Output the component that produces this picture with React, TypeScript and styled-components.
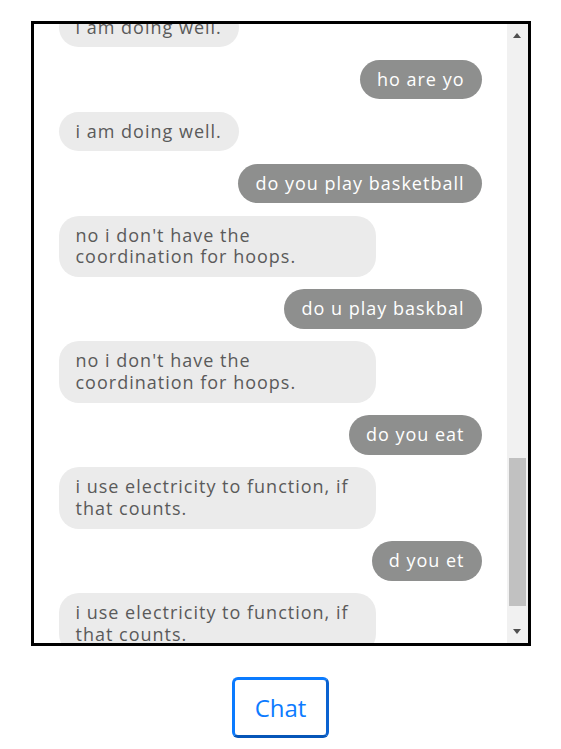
import React, { useLayoutEffect, useRef, useState } from "react";
import styled, { createGlobalStyle } from "styled-components";

const GlobalStyle = createGlobalStyle`
  html, body {
    margin: 0;
    padding: 0;
    background: #ffffff;
    font-family: "Open Sans", "Noto Sans", sans-serif;
  }
`;

const Page = styled.div`
  display: flex;
  flex-direction: column;
  align-items: center;
  padding-top: 21px;
`;

const ChatFrame = styled.div`
  box-sizing: border-box;
  width: 500px;
  height: 625px;
  border: 3px solid #000000;
  display: flex;
  background: #ffffff;
`;

const MessageList = styled.div`
  position: relative;
  flex: 1;
  min-width: 0;
  overflow-y: scroll;
  scrollbar-width: none;
  display: flex;
  flex-direction: column;
  gap: 12.25px;
  padding: 9px 25px 54px;

  &::-webkit-scrollbar {
    display: none;
  }
`;

const ScrollBar = styled.div`
  width: 21px;
  flex-shrink: 0;
  display: flex;
  flex-direction: column;
  background: #f1f1f1;
`;

const ArrowButton = styled.div<{ $dir: "up" | "down" }>`
  height: 21px;
  box-sizing: border-box;
  display: flex;
  justify-content: center;
  align-items: ${(p) => (p.$dir === "up" ? "flex-start" : "flex-end")};
  padding: ${(p) => (p.$dir === "up" ? "9px 0 0" : "0 0 9px")};

  &::after {
    content: "";
    width: 0;
    height: 0;
    border-left: 4.5px solid transparent;
    border-right: 4.5px solid transparent;
    ${(p) =>
      p.$dir === "up"
        ? "border-bottom: 5px solid #505050;"
        : "border-top: 5px solid #505050;"}
  }
`;

const Track = styled.div`
  flex: 1;
  display: flex;
  flex-direction: column;
  padding: 0 2px;
`;

const Thumb = styled.div`
  background: #c1c1c1;
  flex-shrink: 0;
`;

const Row = styled.div<{ $from: "user" | "bot" }>`
  display: flex;
  flex-shrink: 0;
  justify-content: ${(p) => (p.$from === "user" ? "flex-end" : "flex-start")};
`;

const Bubble = styled.div<{ $from: "user" | "bot" }>`
  max-width: 75%;
  box-sizing: border-box;
  padding: 9px 17px;
  border-radius: 20px;
  font-size: 18px;
  line-height: 21.75px;
  letter-spacing: 1px;
  background: ${(p) => (p.$from === "user" ? "#8e8f8e" : "#ebebeb")};
  color: ${(p) => (p.$from === "user" ? "#ffffff" : "#5a5a5a")};
`;

const ChatButton = styled.button`
  margin-top: 31px;
  box-sizing: border-box;
  width: 97px;
  height: 61px;
  border: 3px solid #0b7bff;
  border-right-color: #0a62d0;
  border-bottom-color: #0656b8;
  border-radius: 6px;
  background: #ffffff;
  color: #0d7bff;
  font-family: "Open Sans", "Noto Sans", sans-serif;
  font-size: 24px;
  padding: 0;
  cursor: pointer;
`;

type Msg = { from: "user" | "bot"; text: string; anchor?: boolean };

const messages: Msg[] = [
  { from: "bot", text: "hi! i'm a chatbot." },
  { from: "user", text: "hi" },
  { from: "bot", text: "hello! how are you?" },
  { from: "user", text: "good" },
  { from: "bot", text: "that's good to hear." },
  { from: "user", text: "what is your name" },
  { from: "bot", text: "i am a chatbot. i don't have a name yet." },
  { from: "user", text: "wat is ur name" },
  { from: "bot", text: "i am a chatbot. i don't have a name yet." },
  { from: "user", text: "where are you from" },
  { from: "bot", text: "i live inside a computer." },
  { from: "user", text: "were r u frm" },
  { from: "bot", text: "i live inside a computer." },
  { from: "user", text: "how old are you" },
  { from: "bot", text: "i was created recently, so i'm pretty young." },
  { from: "user", text: "hw old r u" },
  { from: "bot", text: "i was created recently, so i'm pretty young." },
  { from: "user", text: "what do you like" },
  { from: "bot", text: "i like talking to people." },
  { from: "user", text: "wat u like" },
  { from: "bot", text: "i like talking to people." },
  { from: "user", text: "do you have friends" },
  { from: "bot", text: "everyone i talk to is my friend." },
  { from: "user", text: "do u hav frends" },
  { from: "bot", text: "everyone i talk to is my friend." },
  { from: "user", text: "hello" },
  { from: "bot", text: "hi there!" },
  { from: "user", text: "hi" },
  { from: "bot", text: "hi there!" },
  { from: "user", text: "how are you" },
  { from: "bot", text: "i am doing well.", anchor: true },
  { from: "user", text: "ho are yo" },
  { from: "bot", text: "i am doing well." },
  { from: "user", text: "do you play basketball" },
  { from: "bot", text: "no i don't have the coordination for hoops." },
  { from: "user", text: "do u play baskbal" },
  { from: "bot", text: "no i don't have the coordination for hoops." },
  { from: "user", text: "do you eat" },
  { from: "bot", text: "i use electricity to function, if that counts." },
  { from: "user", text: "d you et" },
  { from: "bot", text: "i use electricity to function, if that counts." },
];

export default function App() {
  const listRef = useRef<HTMLDivElement>(null);
  const anchorRef = useRef<HTMLDivElement>(null);
  const trackRef = useRef<HTMLDivElement>(null);
  const [thumb, setThumb] = useState({ top: 0, height: 0 });

  const updateThumb = () => {
    const list = listRef.current;
    const track = trackRef.current;
    if (!list || !track) return;
    const len = track.clientHeight;
    const h = Math.max(20, (list.clientHeight / list.scrollHeight) * len);
    const t = (list.scrollTop / list.scrollHeight) * len;
    setThumb({ top: t, height: h });
  };

  useLayoutEffect(() => {
    const list = listRef.current;
    const anchor = anchorRef.current;
    if (list && anchor) {
      list.scrollTop = anchor.offsetTop + 15.5;
    }
    updateThumb();
  }, []);

  return (
    <>
      <GlobalStyle />
      <Page>
        <ChatFrame>
          <MessageList ref={listRef} onScroll={updateThumb}>
            {messages.map((m, i) => (
              <Row key={i} $from={m.from} ref={m.anchor ? anchorRef : undefined}>
                <Bubble $from={m.from}>{m.text}</Bubble>
              </Row>
            ))}
          </MessageList>
          <ScrollBar>
            <ArrowButton $dir="up" />
            <Track ref={trackRef}>
              <Thumb style={{ marginTop: thumb.top, height: thumb.height }} />
            </Track>
            <ArrowButton $dir="down" />
          </ScrollBar>
        </ChatFrame>
        <ChatButton type="button">Chat</ChatButton>
      </Page>
    </>
  );
}
